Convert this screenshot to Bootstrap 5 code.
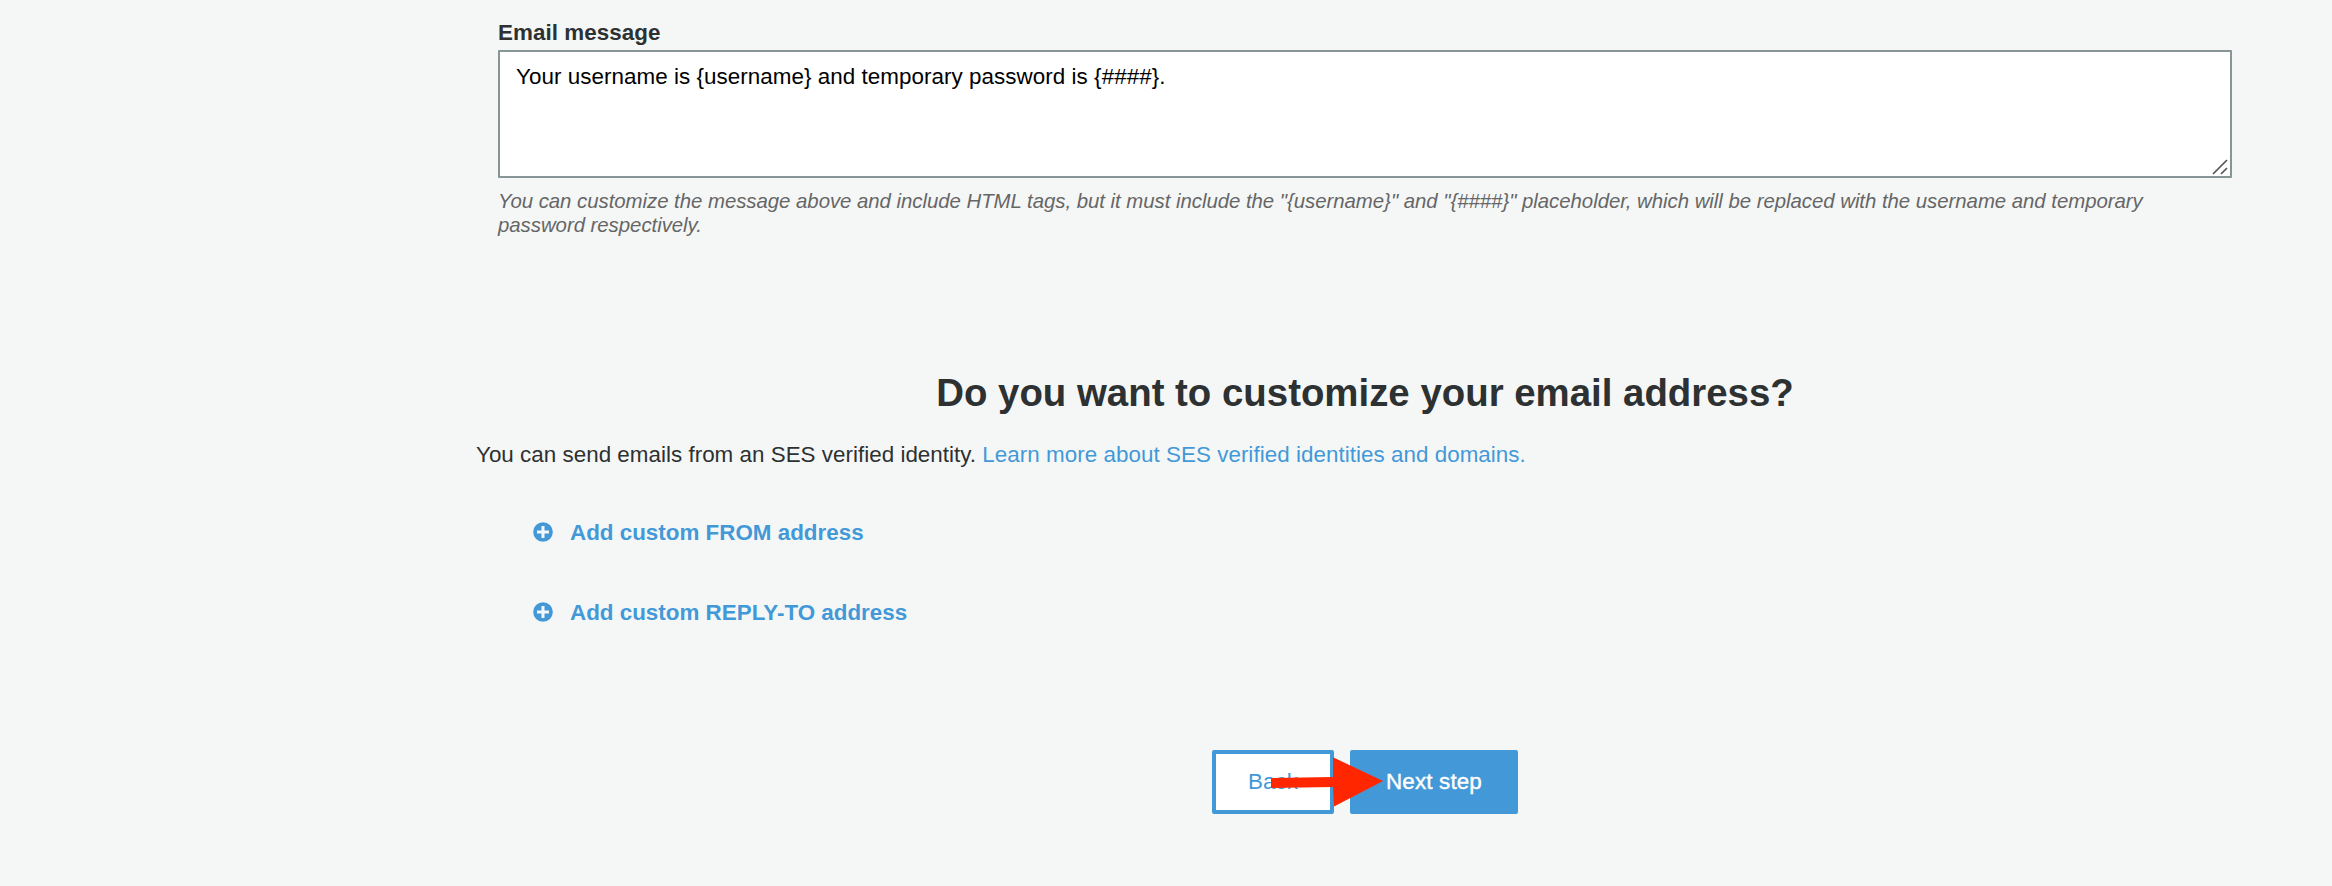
<!DOCTYPE html>
<html lang="en">
<head>
<meta charset="utf-8">
<title>Message customizations</title>
<link href="https://cdn.jsdelivr.net/npm/bootstrap@5.3.0/dist/css/bootstrap.min.css" rel="stylesheet">
<style>
body { background: #f5f7f7; color: #2d3131; font: 22.4px/32px "Liberation Sans", Arial, sans-serif; height: 886px; overflow: hidden; }
main { margin-left: 476px; width: 1778px; padding-top: 17px; }
.field-block { padding: 0 22px; }
.form-label { margin-bottom: 1px; letter-spacing: .05px; }
textarea.form-control { height: 128px; padding: 9px 16px; border: 2px solid #879596; border-radius: 1px; background: #fff; color: #000; font-size: 22.4px; line-height: 32px; letter-spacing: .05px; resize: none; }
.grip { right: 4px; bottom: 3px; }
.hint { margin-top: 11px; font-size: 20.4px; line-height: 24px; letter-spacing: -.04px; color: #666; }
h2 { margin: 132px 0 22px; font-size: 38.4px; line-height: 48px; font-weight: 700; }
a { color: #4399d7; text-decoration: none; }
.intro { letter-spacing: .02px; }
.learn { letter-spacing: .04px; }
.add-list { margin: 45px 0 121px 57px; gap: 47px; }
.add-list a { gap: 17px; }
.add-list span { margin-top: 1px; }
.add-list svg { margin-bottom: 1px; }
.wizard-actions { gap: 16px; }
.wizard-actions .btn { height: 64px; border: 4px solid #4399d7; border-radius: 2px; font-size: 22.4px; line-height: 32px; padding: 0; }
.btn-back { width: 122px; background: #fff; color: #4399d7; }
.btn-next { width: 168px; background: #4399d7; color: #fff; -webkit-text-stroke: .4px #fff; letter-spacing: .15px; }
.arrow { left: 59px; top: 7px; }
</style>
<script src="https://cdn.jsdelivr.net/npm/bootstrap@5.3.0/dist/js/bootstrap.bundle.min.js"></script>
</head>
<body>
<main>
  <div class="field-block">
    <label class="form-label d-block fw-bold" for="msg">Email message</label>
    <div class="position-relative">
      <textarea class="form-control d-block" id="msg">Your username is {username} and temporary password is {####}.</textarea>
      <svg class="grip position-absolute" width="16" height="16" fill="none" stroke="#555" stroke-width="1.7"><path d="M1 15 15 1M9 15l6-6"/></svg>
    </div>
    <div class="hint fst-italic">You can customize the message above and include HTML tags, but it must include the "{username}" and "{####}" placeholder, which will be replaced with the username and temporary password respectively.</div>
  </div>
  <h2 class="text-center">Do you want to customize your email address?</h2>
  <p class="m-0"><span class="intro">You can send emails from an SES verified identity.</span> <a class="learn" href="#">Learn more about SES verified identities and domains.</a></p>
  <div class="add-list d-flex flex-column align-items-start">
    <a href="#" class="d-flex align-items-center fw-bold"><svg width="20" height="20" viewBox="0 0 20 20"><circle cx="10" cy="10" r="9.8" fill="#4399d7"/><path d="M10 4v12M4 10h12" stroke="#f5f7f7" stroke-width="3"/></svg><span>Add custom FROM address</span></a>
    <a href="#" class="d-flex align-items-center fw-bold"><svg width="20" height="20" viewBox="0 0 20 20"><circle cx="10" cy="10" r="9.8" fill="#4399d7"/><path d="M10 4v12M4 10h12" stroke="#f5f7f7" stroke-width="3"/></svg><span>Add custom REPLY-TO address</span></a>
  </div>
  <div class="d-flex justify-content-center">
    <div class="wizard-actions d-flex position-relative">
      <button type="button" class="btn btn-back">Back</button>
      <button type="button" class="btn btn-next">Next step</button>
      <svg class="arrow position-absolute" width="112" height="50"><path d="M0 21 62 20V.3L112 24 63 49.6 62 30 0 31z" fill="#ff2600"/></svg>
    </div>
  </div>
</main>
</body>
</html>
